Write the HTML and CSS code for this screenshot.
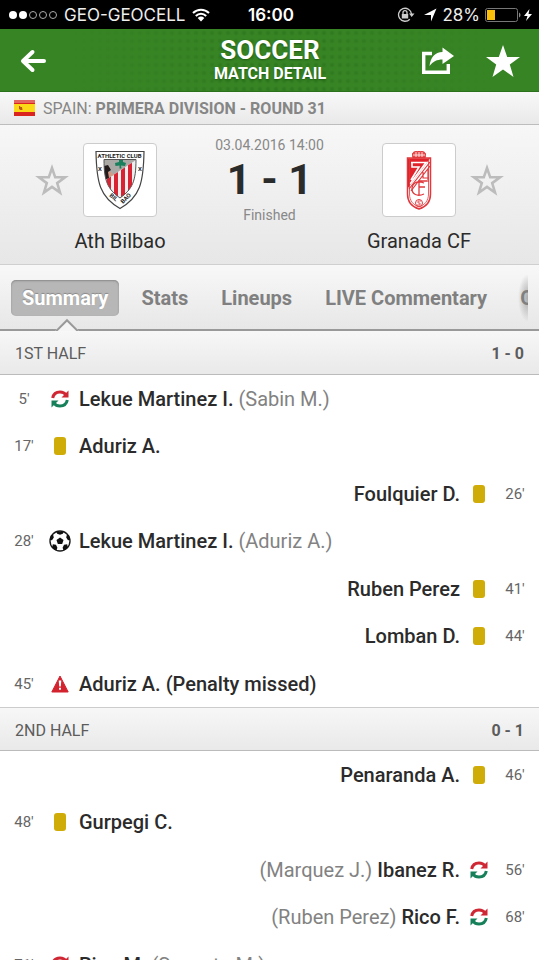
FILE: index.html
```html
<!DOCTYPE html>
<html lang="en">

<head>
    <meta charset="UTF-8">
    <meta name="viewport" content="width=device-width, initial-scale=1.0">
    <title>Soccer - Match detail</title>
    <link rel="stylesheet" href="styles.css">
</head>

<body>
    <svg class="sprite" aria-hidden="true">
        <symbol id="star" viewBox="0 0 34 32">
            <path d="M17 0l4.200 12H34L23.800 19.500 27.500 32 17 24.500 6.500 32l3.700-12.500L0 12h12.800z" />
        </symbol>
        <symbol id="star-outline" viewBox="0 0 34 32">
            <path fill="none" stroke="currentColor" stroke-width="2.600"
                d="M17 4l3.200 9.300H30L22.200 19.100 25 28.500 17 22.900 9 28.500l2.800-9.400L4 13.300h9.800z" />
        </symbol>
        <symbol id="sub" viewBox="0 0 18 18">
            <path fill="none" stroke="#cf2734" stroke-width="3" d="M1.700 8C2.500 3.800 5 2 9 2c2.800 0 4.700 1 5.800 2.800" />
            <path fill="#cf2734" d="M17.500.5v7h-7z" />
            <path fill="none" stroke="#16805a" stroke-width="3" d="M16.300 10C15.500 14.200 13 16 9 16c-2.800 0-4.700-1-5.800-2.800" />
            <path fill="#16805a" d="M.5 17.500v-7h7z" />
        </symbol>
        <symbol id="ball" viewBox="0 0 22 22">
            <circle cx="11" cy="11" r="10" fill="#fff" stroke="#1c1c1c" stroke-width="1.400" />
            <path fill="#111" d="M11 7.400l3.500 2.500-1.300 4.100H8.800L7.500 9.900z" />
            <path fill="#111" d="M7 1.600h8l-1.200 2.200L11 4.800 8.200 3.800zM.8 10l1-4.500L4 4.300l.8 3.200L3 10.300zM21.200 10l-1-4.500L18 4.300l-.8 3.200 1.800 2.800zM3.200 17.500l.6-3.300 3.200.5 1.400 3-1 2.800C5.700 20 4.300 19 3.200 17.500zM18.800 17.500l-.6-3.300-3.200.5-1.400 3 1 2.800c1.700-.5 3.100-1.500 4.200-3z" />
        </symbol>
        <symbol id="warning" viewBox="0 0 18 18">
            <path fill="#d2232f" stroke="#d2232f" stroke-linejoin="round" d="M9 1l8.200 16H.8z" />
            <path fill="#fff" d="M7.700 5.500h2.600l-.5 6H8.200zM8 12.700h2v2H8z" />
        </symbol>
    </svg>

    <div class="status-bar">
        <div class="carrier">
            <svg width="48" height="10" viewBox="0 0 48 10" fill="none" stroke="#aaa">
                <circle cx="4" cy="5" r="4" fill="#fff" stroke="none" />
                <circle cx="14" cy="5" r="4" fill="#fff" stroke="none" />
                <circle cx="24" cy="5" r="3.500" />
                <circle cx="34" cy="5" r="3.500" />
                <circle cx="44" cy="5" r="3.500" />
            </svg>
            <span>GEO-GEOCELL</span>
            <svg width="18" height="14" viewBox="0 0 18 14" fill="none" stroke="#fff" stroke-width="2">
                <path d="M1 5C5.500.500 12.500.500 17 5M3.800 8c3-3 7.400-3 10.400 0" />
                <path fill="#fff" stroke="none" d="M5.700 10c2-1.900 4.600-1.900 6.600 0L9 13.500z" />
            </svg>
        </div>
        <time class="clock">16:00</time>
        <div class="battery">
            <svg width="18" height="16" viewBox="0 0 18 16" fill="none" stroke="#ccc" stroke-width="1.300">
                <path d="M12.800 12.200A6.500 6.500 0 1 1 14.500 7" />
                <path fill="#ccc" stroke="none" d="M12 6.500h5.500L14.700 10zM4.800 7h6.400v4.600H4.800z" />
                <path d="M6 7.200V5.600a2 2 0 0 1 4 0v1.600" />
            </svg>
            <svg width="14" height="14" viewBox="0 0 14 14" fill="#fff">
                <path d="M13.500.5L8 13.500V7H1z" />
            </svg>
            <span>28%</span>
            <svg width="48" height="14" viewBox="0 0 48 14">
                <rect x=".5" y=".5" width="32" height="13" rx="2" fill="none" stroke="#777" />
                <rect x="2" y="2" width="8" height="10" fill="#fcc00a" />
                <path fill="#888" d="M34 4.500c2 .8 2 4.200 0 5z" />
                <path fill="#fff" d="M44.500 1L39 8h3.500L41 13l6-7h-3.500z" />
            </svg>
        </div>
    </div>

    <header class="app-header">
        <button class="icon-button" type="button" aria-label="Back">
            <svg width="26" height="24" viewBox="0 0 26 24" fill="none" stroke="#fff" stroke-width="4">
                <path stroke-linecap="round" stroke-linejoin="round" d="M12.500 3L3 12l9.500 9M4 12h20" />
            </svg>
        </button>
        <div class="header-title">
            <h1>SOCCER</h1>
            <p>MATCH DETAIL</p>
        </div>
        <div class="header-actions">
            <button class="icon-button" type="button" aria-label="Share">
                <svg width="34" height="28" viewBox="0 0 34 28">
                    <path fill="none" stroke="#fff" stroke-width="3.400" d="M11 6.500H2.700v18.800h24.600V17" />
                    <path fill="#fff" d="M8.500 19C9.500 10.500 14 5 21.500 5V.500L33 9l-11.500 8v-4.500C16 12.500 12 14.500 8.500 19z" />
                </svg>
            </button>
            <button class="icon-button" type="button" aria-label="Favourite match">
                <svg width="34" height="32" fill="#fff"><use href="#star" /></svg>
            </button>
        </div>
    </header>

    <div class="league">
        <svg class="flag" width="21" height="16" viewBox="0 0 21 16">
            <path fill="#d9251d" d="M0 0h21v16H0z" />
            <path fill="#fcd916" d="M0 4h21v8H0z" />
            <path fill="#b8591c" d="M5 6h1.200v1H8l.5 3H6.500L5 9z" />
            <path fill="#fff" opacity=".3" d="M0 0h21v3H0z" />
        </svg>
        <p>SPAIN: <strong>PRIMERA DIVISION - ROUND 31</strong></p>
    </div>

    <section class="match">
        <div class="team home">
            <button class="favourite" type="button" aria-label="Favourite Ath Bilbao">
                <svg width="34" height="32"><use href="#star-outline" /></svg>
            </button>
            <div class="logo">
                <svg width="50" height="60" viewBox="0 0 50 60">
                    <path fill="#fff" stroke="#444" stroke-width="1.200" d="M1 1.500h48C48.500 33 45 47 25 58.500 5 47 1.500 33 1 1.500z" />
                    <clipPath id="shield"><path d="M9 9.500h32C41 31 37.500 39 25 48 12.500 39 9 31 9 9.500z" /></clipPath>
                    <g clip-path="url(#shield)">
                        <path fill="#aaa9a5" d="M9 9h33v40H9z" />
                        <path fill="#eee" d="M9 31L41 10v39H9z" />
                        <path fill="#d92332" d="M12 29l4-2.600V49h-4zM19 24.500l4-2.600V49h-4zM26 20l4-2.700V49h-4zM33 15.300l4-2.600V49h-4z" />
                        <path fill="#d29a87" d="M9 21l7 1 3 3-10 5z" />
                        <path fill="#231a1c" d="M9 16l4-1 3 5-3 2 1 6-5 2z" />
                        <path fill="#18805c" d="M24 10h4v2l3 1-1 3-4-.5.500 3h-2v-3l-4 .5-.5-3 4-1z" />
                    </g>
                    <path fill="none" stroke="#555" d="M9 9.500h32C41 31 37.500 39 25 48 12.500 39 9 31 9 9.500z" />
                    <g class="crest-text">
                        <text x="2.500" y="7.500">ATHLETIC CLUB</text>
                        <text x="3" y="21">X</text>
                        <text x="43" y="21">X</text>
                        <text transform="translate(14 46) rotate(40)">BIL</text>
                        <text transform="translate(28 54) rotate(-45)">BAO</text>
                    </g>
                </svg>
            </div>
            <h2>Ath Bilbao</h2>
        </div>
        <div class="score">
            <time>03.04.2016 14:00</time>
            <strong>1 - 1</strong>
            <span>Finished</span>
        </div>
        <div class="team away">
            <div class="logo">
                <svg width="26" height="60" viewBox="0 0 26 60" fill="none" stroke="#e0383c">
                    <path fill="#e84b4b" d="M7 8C5 1 9 1.500 13 1.500S21 1 19 8z" />
                    <path stroke="#fff" stroke-width=".8" d="M7 5h12M10 2v5M13 2v5M16 2v5" />
                    <path fill="#fff" stroke-width="1.500" d="M1.500 8h23v36c0 8-5 13-11.500 15C6.500 57 1.500 52 1.500 44z" />
                    <path fill="#e1222a" stroke="none" d="M2 8.500h22L2 38z" />
                    <path stroke="#fff" stroke-width="1.600" d="M5 12.500h15L4 34M6 13v4h7L5 30" />
                    <path stroke-width="1.200" d="M24 12L3 39M24 16L5 41M17 22v6h6M22 19v13" />
                    <path stroke-width="1.300" d="M18 33c-8-3-12 1-12 6s5 8 12 5M13 46V31h8M13 37h6" />
                    <circle cx="13" cy="53" r="3.500" />
                    <path stroke-width=".8" d="M15 51h-3v2h2v2h-3M3.500 8v36c0 7 4 11 9.500 13 5.500-2 9.500-6 9.500-13V8" />
                </svg>
            </div>
            <button class="favourite" type="button" aria-label="Favourite Granada CF">
                <svg width="34" height="32"><use href="#star-outline" /></svg>
            </button>
            <h2>Granada CF</h2>
        </div>
    </section>

    <nav class="tabs">
        <div class="tabs-scroll">
            <button class="tab active" type="button">Summary</button>
            <button class="tab" type="button">Stats</button>
            <button class="tab" type="button">Lineups</button>
            <button class="tab" type="button">LIVE Commentary</button>
            <button class="tab" type="button">Odds</button>
        </div>
    </nav>

    <main class="summary">
        <div class="period">
            <h3>1ST HALF</h3>
            <strong>1 - 0</strong>
        </div>
        <ul class="events">
            <li>
                <span class="minute">5'</span>
                <svg class="icon" width="18" height="18"><use href="#sub" /></svg>
                <p>Lekue Martinez I. <span>(Sabin M.)</span></p>
            </li>
            <li>
                <span class="minute">17'</span>
                <i class="icon card"></i>
                <p>Aduriz A.</p>
            </li>
            <li class="right">
                <span class="minute">26'</span>
                <i class="icon card"></i>
                <p>Foulquier D.</p>
            </li>
            <li>
                <span class="minute">28'</span>
                <svg class="icon" width="22" height="22"><use href="#ball" /></svg>
                <p>Lekue Martinez I. <span>(Aduriz A.)</span></p>
            </li>
            <li class="right">
                <span class="minute">41'</span>
                <i class="icon card"></i>
                <p>Ruben Perez</p>
            </li>
            <li class="right">
                <span class="minute">44'</span>
                <i class="icon card"></i>
                <p>Lomban D.</p>
            </li>
            <li>
                <span class="minute">45'</span>
                <svg class="icon" width="18" height="18"><use href="#warning" /></svg>
                <p>Aduriz A. (Penalty missed)</p>
            </li>
        </ul>

        <div class="period">
            <h3>2ND HALF</h3>
            <strong>0 - 1</strong>
        </div>
        <ul class="events">
            <li class="right">
                <span class="minute">46'</span>
                <i class="icon card"></i>
                <p>Penaranda A.</p>
            </li>
            <li>
                <span class="minute">48'</span>
                <i class="icon card"></i>
                <p>Gurpegi C.</p>
            </li>
            <li class="right">
                <span class="minute">56'</span>
                <svg class="icon" width="18" height="18"><use href="#sub" /></svg>
                <p><span>(Marquez J.)</span> Ibanez R.</p>
            </li>
            <li class="right">
                <span class="minute">68'</span>
                <svg class="icon" width="18" height="18"><use href="#sub" /></svg>
                <p><span>(Ruben Perez)</span> Rico F.</p>
            </li>
            <li>
                <span class="minute">71'</span>
                <svg class="icon" width="18" height="18"><use href="#sub" /></svg>
                <p>Rico M. <span>(Susaeta M.)</span></p>
            </li>
        </ul>
    </main>
</body>

</html>
```

FILE: styles.css
```css
* {
    box-sizing: border-box;
}

body {
    font-family: Roboto, "Liberation Sans", sans-serif;
    font-size: 20px;
    color: #2b2b2b;
    background-color: #fff;
    display: flex;
    flex-direction: column;
    height: 100vh;
    margin: 0;
}

h1,
h2,
h3,
p,
ul {
    margin: 0;
    padding: 0;
}

button {
    font: inherit;
    color: inherit;
    background: none;
    border: none;
    padding: 0;
    cursor: pointer;
}

svg {
    display: block;
}

.sprite {
    display: none;
}

/* phone status bar */

.status-bar {
    flex: none;
    display: grid;
    grid-template-columns: 1fr auto 1fr;
    align-items: center;
    height: 29px;
    padding: 0 6px 0 9px;
    background-color: #000;
    color: #eee;
    font-family: Inter, "Liberation Sans", sans-serif;
    font-size: 17px;
}

.carrier,
.battery {
    display: flex;
    align-items: center;
    gap: 7px;
}

.battery {
    justify-content: flex-end;
    gap: 5px;
}

.battery svg:first-child {
    margin-right: 3px;
}

.clock {
    font-weight: 600;
    color: #fff;
}

/* green header */

.app-header {
    flex: none;
    display: grid;
    grid-template-columns: 1fr auto 1fr;
    align-items: center;
    height: 63px;
    padding: 2px 19px 0 20px;
    color: #fff;
    background-color: #378425;
    background-image:
        linear-gradient(90deg, #378425 12%, transparent 45%, transparent 60%, #378425 92%),
        radial-gradient(circle, #2f7a1e 1px, transparent 3px);
    background-size: auto, 8px 8px;
    border-bottom: 1px solid #2c711b;
}

.header-title {
    text-align: center;
    font-weight: 700;
    text-shadow: 0 1px 2px #1f5a12;
}

.header-title h1 {
    font-size: 26px;
    line-height: 26px;
}

.header-title p {
    font-size: 16px;
    line-height: 22px;
}

.header-actions {
    display: flex;
    justify-content: flex-end;
    align-items: center;
    gap: 31px;
}

.league {
    flex: none;
    display: flex;
    align-items: center;
    gap: 8px;
    height: 33px;
    padding: 0 14px;
    color: #868686;
    font-size: 16px;
    background: linear-gradient(#f8f8f8, #e9e9e9);
    border-bottom: 1px solid #bdbdbd;
}

/* teams and score */

.match {
    flex: none;
    display: flex;
    justify-content: space-between;
    height: 140px;
    padding: 18px 35px 0;
    background: linear-gradient(#f7f7f7, #e7e7e7);
    border-bottom: 1px solid #cfcfcf;
}

.team {
    display: grid;
    grid-template-columns: 34px 74px;
    column-gap: 14px;
    align-items: center;
    align-content: start;
    row-gap: 11px;
}

.away {
    grid-template-columns: 74px 34px;
}

.favourite {
    color: #bcbcbc;
}

.logo {
    display: flex;
    justify-content: center;
    align-items: center;
    height: 74px;
    background-color: #fff;
    border: 1px solid #ccc;
    border-radius: 4px;
}

.crest-text {
    font-size: 6px;
    font-weight: 700;
    fill: #222;
}

.team h2 {
    grid-row: 2;
    grid-column: 2;
    justify-self: center;
    font-size: 20px;
    line-height: 26px;
    font-weight: 400;
    white-space: nowrap;
}

.away h2 {
    grid-column: 1;
}

.score {
    display: flex;
    flex-direction: column;
    align-items: center;
    gap: 3px;
    color: #888;
    font-size: 14px;
    line-height: 4px;
}

.score strong {
    color: #2b2b2b;
    font-size: 42px;
    line-height: 60px;
}

/* tabs */

.tabs {
    flex: none;
    height: 66px;
    padding: 0 11px;
    background: linear-gradient(#f8f8f8, #e7e7e7);
    border-bottom: 2px solid #999;
}

.tabs-scroll {
    display: flex;
    align-items: center;
    gap: 11px;
    height: 66px;
    overflow: hidden;
    background: radial-gradient(ellipse 10px 24px at right, #aaa, transparent);
}

.tab {
    position: relative;
    flex: none;
    height: 36px;
    padding: 0 11px;
    color: #808080;
    font-size: 20px;
    font-weight: 700;
    border-radius: 5px;
}

.tab.active {
    color: #fff;
    background-color: #b7b7b7;
    box-shadow: inset 0 1px 2px #888;
    text-shadow: 0 -1px 1px #888;
}

/* arrow under the open tab */

.tab.active::after {
    content: "";
    position: absolute;
    left: 50%;
    top: 43px;
    width: 16px;
    height: 16px;
    margin-left: -8px;
    background-color: #f5f5f5;
    border: 2px solid #999;
    transform: rotate(45deg);
}

/* event list */

.summary {
    flex: 1;
    min-height: 0;
    overflow-y: auto;
    scrollbar-width: none;
}

.period {
    display: flex;
    justify-content: space-between;
    align-items: center;
    height: 44px;
    padding: 2px 15px 0;
    color: #5c5c5c;
    font-size: 16px;
    background: linear-gradient(#f7f7f7, #e9e9e9);
    border-bottom: 1px solid #bbb;
}

.events + .period {
    border-top: 1px solid #ccc;
}

.period h3 {
    font-size: 16px;
    font-weight: 400;
}

.events {
    list-style: none;
}

.events li {
    display: grid;
    grid-template-columns: 34px 22px 1fr;
    column-gap: 8px;
    align-items: center;
    height: 47px;
    padding: 0 7px;
}

.events li:nth-child(even) {
    height: 48px;
}

.events .right {
    direction: rtl;
}

.minute {
    direction: ltr;
    text-align: center;
    color: #666;
    font-size: 15px;
}

.icon {
    justify-self: center;
}

.card {
    width: 12px;
    height: 18px;
    background-color: #d0ac08;
    border-radius: 3px;
}

.events p {
    direction: ltr;
    font-weight: 500;
}

.right p {
    text-align: right;
}

.events p span {
    color: #828282;
    font-weight: 400;
}
```
